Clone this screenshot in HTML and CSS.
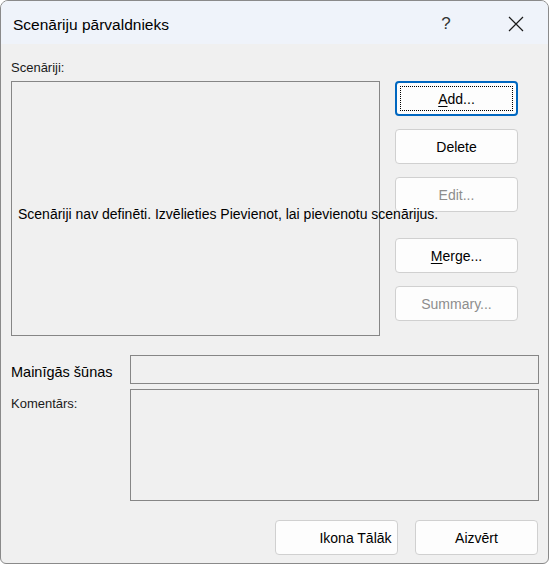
FILE: index.html
```html
<!DOCTYPE html>
<html lang="lv">
<head>
    <meta charset="UTF-8">
    <meta name="viewport" content="width=device-width, initial-scale=1.0">
    <title>Scenāriju pārvaldnieks</title>
    <link rel="stylesheet" href="styles.css">
</head>
<body>
    <div class="dialog">
        <div class="titlebar">
            <span class="title">Scenāriju pārvaldnieks</span>
            <span class="help">?</span>
            <span class="close">
                <svg width="16" height="16" viewBox="0 0 16 16">
                    <path d="M1 1 L15 15 M15 1 L1 15" stroke="#1a1a1a" stroke-width="1.2" fill="none"/>
                </svg>
            </span>
        </div>

        <div class="content">
            <div class="label small">Scenāriji:</div>
            <div class="main-row">
                <div class="listbox">
                    <span class="empty-msg">Scenāriji nav definēti. Izvēlieties Pievienot, lai pievienotu scenārijus.</span>
                </div>
                <div class="side-buttons">
                    <button class="button default"><span class="focus"><u>A</u>dd...</span></button>
                    <button class="button">Delete</button>
                    <button class="button" disabled>Edit...</button>
                    <button class="button spaced"><u>M</u>erge...</button>
                    <button class="button" disabled>Summary...</button>
                </div>
            </div>

            <div class="field-row">
                <div class="label big">Mainīgās šūnas</div>
                <div class="field"></div>
            </div>
            <div class="field-row top">
                <div class="label small comment-label">Komentārs:</div>
                <div class="field tall"></div>
            </div>

            <div class="footer">
                <button class="button next">Ikona Tālāk</button>
                <button class="button">Aizvērt</button>
            </div>
        </div>
    </div>
</body>
</html>
```

FILE: styles.css
```css
body {
    margin: 0;
    background-color: #ffffff;
    font-family: "Liberation Sans", Arial, sans-serif;
    color: #000;
}

.dialog {
    width: 547px;
    height: 562px;
    border: 1px solid #8a8a8a;
    border-radius: 8px 8px 6px 6px;
    background-color: #f0f0f0;
    overflow: hidden;
}

.titlebar {
    height: 43px;
    background-color: #eff3fa;
    display: flex;
    align-items: center;
    padding-left: 12px;
}

.title {
    font-size: 15.5px;
    flex: 1;
    padding-top: 4px;
}

.help {
    font-size: 17px;
    font-weight: 300;
    color: #333;
    width: 20px;
    margin-right: 52px;
    text-align: center;
    padding-top: 3px;
}

.close {
    width: 16px;
    height: 16px;
    margin-right: 24px;
    margin-top: 2px;
}

.close svg {
    display: block;
}

.content {
    padding: 16px 9px 0 10px;
}

.label.small {
    font-size: 13px;
    line-height: 16px;
    color: #1a1a1a;
}

.label.big {
    font-size: 14.5px;
    padding-top: 9px;
}

.main-row {
    display: flex;
    gap: 15px;
    margin-top: 5px;
}

.listbox {
    width: 361px;
    height: 253px;
    border: 1px solid #868686;
    display: flex;
    align-items: center;
    padding-left: 6px;
}

.empty-msg {
    white-space: nowrap;
    font-size: 14px;
    position: relative;
    z-index: 1;
    margin-top: 10px;
}

.side-buttons {
    display: flex;
    flex-direction: column;
    gap: 13px;
}

.button {
    width: 123px;
    height: 35px;
    background-color: #fdfdfd;
    border: 1px solid #d0d0d0;
    border-radius: 4px;
    font-family: inherit;
    font-size: 14px;
    color: #000;
    padding: 0;
}

.button:disabled {
    color: #8d8d8d;
}

.button u {
    text-underline-offset: 2px;
}

.button.default {
    border: 2px solid #0067c0;
    padding: 3px;
}

.button.default .focus {
    display: flex;
    height: 100%;
    align-items: center;
    justify-content: center;
    border: 1px dotted #000;
    box-sizing: border-box;
}

.button.spaced {
    margin-top: 13px;
}

.field-row {
    display: grid;
    grid-template-columns: 119px 1fr;
    margin-top: 19px;
}

.field-row.top {
    margin-top: 5px;
}

.field {
    height: 27px;
    border: 1px solid #868686;
}

.field.tall {
    height: 110px;
}

.comment-label {
    padding-top: 7px;
}

.footer {
    display: flex;
    justify-content: flex-end;
    gap: 17px;
    margin-top: 19px;
    padding-right: 1px;
}

.button.next {
    padding-left: 38px;
}
```
